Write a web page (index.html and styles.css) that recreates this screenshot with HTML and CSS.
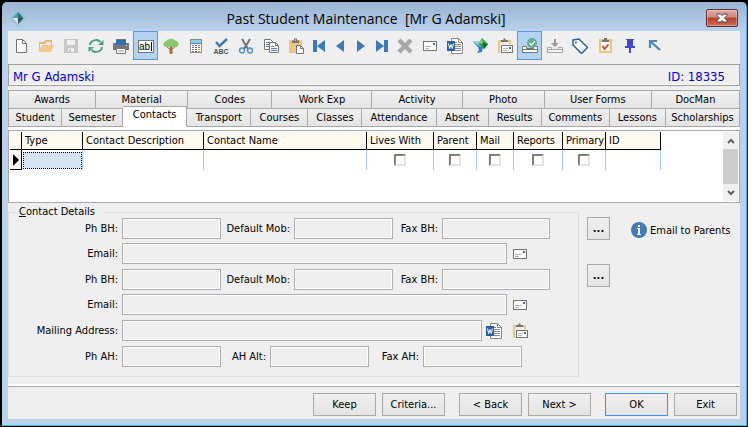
FILE: index.html
```html
<!DOCTYPE html>
<html lang="en">
<head>
    <meta charset="UTF-8">
    <meta name="viewport" content="width=device-width, initial-scale=1.0">
    <title>Past Student Maintenance</title>
    <link rel="stylesheet" href="styles.css">
</head>
<body>
    <!-- Shared icons -->
    <svg class="sprite" aria-hidden="true">
        <symbol id="i-mail" viewBox="0 0 16 16">
            <rect x="1.5" y="3.5" width="13" height="9" fill="#fff" stroke="#757575"/>
            <path d="M3 8.5h6M3 10.5h4" stroke="#b4b4b4"/>
            <rect x="11" y="5" width="2" height="2" fill="#3f72b5"/>
        </symbol>
        <symbol id="i-word" viewBox="0 0 16 16">
            <path d="M4.500 .5h7l4 4v11h-11z" fill="#fff" stroke="#8a8a8a"/>
            <path d="M11.500 .5v4h4" fill="none" stroke="#8a8a8a"/>
            <path d="M8 6.500h6M8 8.500h6M8 10.500h6M8 12.500h6M6 4.500h4" stroke="#8a8a8a"/>
            <rect x="0" y="3" width="8" height="10" fill="#2b5ea5"/>
            <path d="M1.500 5.500l1.200 5 1.300-4 1.300 4 1.200-5" fill="none" stroke="#fff"/>
        </symbol>
        <symbol id="i-clipmail" viewBox="0 0 16 16">
            <path d="M1 2h3v3H3v10H1zM11 2h3v4h-2V4h-1z" fill="#f0c581"/>
            <path d="M4 4V2h2.500V.5h2V2H11v2z" fill="#757575"/>
            <rect x="4.500" y="7.500" width="11" height="7" fill="#fff" stroke="#757575"/>
            <path d="M6 10.500h5M6 12.500h4" stroke="#b4b4b4"/>
            <rect x="12" y="9" width="2" height="2" fill="#3f72b5"/>
        </symbol>
    </svg>

    <div class="frame">
    <div class="window">
        <header class="titlebar">
            <svg class="logo" viewBox="0 0 16 16">
                <path d="M8 0l8 8-8 8-8-8z" fill="#8fc4c8"/>
                <path d="M8 2L2.500 8H8z" fill="#4f99a5"/>
                <path d="M8 2l5.500 6H8z" fill="#2a7486"/>
                <path d="M2.500 8H8v6z" fill="#d4e6ea"/>
                <path d="M8 8h5.500L8 14z" fill="#3c4b55"/>
            </svg>
            <h1>Past Student Maintenance&nbsp; [Mr G Adamski]</h1>
            <button class="close" aria-label="Close">
                <svg viewBox="0 0 12 10">
                    <path d="M1 1h3.500L6 2.600 7.500 1H11v1.500L8.500 5 11 7.500V9H7.500L6 7.400 4.500 9H1V7.500L3.500 5 1 2.500z" fill="#fff" stroke="#50455a"/>
                </svg>
            </button>
        </header>

        <main class="client">
            <div class="toolbar">
                <button aria-label="New"><svg viewBox="0 0 16 16"><path d="M3.500 1.500h6l4 4v9h-10z" fill="#fff" stroke="#757575"/><path d="M9.500 1.500v4h4" fill="none" stroke="#757575"/></svg></button>
                <button aria-label="Open"><svg viewBox="0 0 16 16"><path d="M1 14V4h5l1-2h7v5h-1V4H8L7 6H2v6z" fill="#e6b877"/><path d="M4 7h12l-3 7H0z" fill="#f3c987"/></svg></button>
                <button aria-label="Save" disabled><svg viewBox="0 0 16 16"><path d="M1 1h14v14H1z" fill="#c8c8c8"/><path d="M4 2h8v5H4zM5 10h6v4H5z" fill="#efefef"/><path d="M6 11h2v3H6z" fill="#c8c8c8"/></svg></button>
                <button aria-label="Refresh"><svg viewBox="0 0 16 16"><path d="M2 7a6 5.500 0 0 1 10.500-3M14 9a6 5.500 0 0 1-10.500 3" fill="none" stroke="#48a488" stroke-width="2"/><path d="M15.500 2v5H10zM.5 14V9H6z" fill="#48a488"/></svg></button>
                <button aria-label="Print"><svg viewBox="0 0 16 16"><path d="M0 5h16v7h-3v-2H3v2H0z" fill="#757575"/><path d="M3 1h10v6H3z" fill="#2f70b5"/><path d="M3 1h10v1H3z" fill="#757575"/><path d="M3.500 10.500h9v5h-9z" fill="#fff" stroke="#757575"/><path d="M5 13h6" stroke="#999"/><path d="M13 7h1v1h-1z" fill="#fff"/></svg></button>
                <button class="pressed" aria-label="Text mode"><svg viewBox="0 0 16 16"><rect x=".5" y="2.500" width="15" height="12" fill="#fff" stroke="#757575"/><text x="1" y="12" class="glyph-ab">ab</text><path d="M13.500 4v9" stroke="#111"/></svg></button>
                <button aria-label="Tree"><svg viewBox="0 0 16 16"><path d="M7 7h2v8.500H7zM3.500 8.500l4 3.500M12.500 8.500l-4 3.500" fill="#99704a" stroke="#99704a"/><path d="M1 8C-.5 6 1 3.500 3 3.500 4 0 10 0 12 2.500c4 0 5 5.500 1.500 6.500-3 1-4-.5-6-.5S2.500 10 1 8z" fill="#8ac66c"/></svg></button>
                <button aria-label="Calculator"><svg viewBox="0 0 16 16"><rect x="2.500" y="1.500" width="11" height="13" fill="#fff" stroke="#8a8a8a"/><path d="M3 2h10v3H3z" fill="#8dcce8"/><path d="M3 5.500h10" stroke="#3c8abb"/><path d="M4 7.500h8M4 9.500h8M4 11.500h8M4 13.500h8" stroke="#777" stroke-dasharray="2 1"/><path d="M10 11.500h2M10 13.500h2" stroke="#f0a040"/></svg></button>
                <button aria-label="Spelling"><svg viewBox="0 0 16 16"><path d="M3 4l3.500 4L14 1" fill="none" stroke="#3f78b8" stroke-width="2.400"/><text x="8" y="16" class="glyph-abc">ABC</text></svg></button>
                <button aria-label="Cut"><svg viewBox="0 0 16 16"><path d="M4 1l6 10M12 1L6 11" stroke="#707070" stroke-width="2"/><circle cx="4" cy="12.500" r="2.500" fill="none" stroke="#4c8bc4" stroke-width="1.300"/><circle cx="12" cy="12.500" r="2.500" fill="none" stroke="#4c8bc4" stroke-width="1.300"/></svg></button>
                <button aria-label="Copy"><svg viewBox="0 0 16 16"><path d="M1.500 1.500h6l3 3v7h-9z" fill="#fff" stroke="#757575"/><path d="M3 4.500h4M3 6.500h3M3 8.500h3" stroke="#4a7fbb"/><path d="M6.500 4.500h6l3 3v7h-9z" fill="#fff" stroke="#757575"/><path d="M12.500 4.500v3h3" fill="none" stroke="#757575"/><path d="M8 8.500h3M8 10.500h6M8 12.500h6" stroke="#4a7fbb"/></svg></button>
                <button aria-label="Paste"><svg viewBox="0 0 16 16"><path d="M1 2h13v5H8v8H1z" fill="#f0c581"/><path d="M4 5V2.500h2V.5h3v2h2V5z" fill="#757575"/><path d="M7 1.500h1v1H7z" fill="#fff"/><path d="M8.500 7.500h4l3 3v5h-7z" fill="#fff" stroke="#757575"/><path d="M12.500 7.500v3h3" fill="none" stroke="#757575"/></svg></button>
                <button class="nav" aria-label="First"><svg viewBox="0 0 16 16"><path d="M2 2h4v12H2zM14 2v12L6 8z" fill="#3f78b8"/></svg></button>
                <button class="nav" aria-label="Previous"><svg viewBox="0 0 16 16"><path d="M12 2v12L4 8z" fill="#3f78b8"/></svg></button>
                <button class="nav" aria-label="Next"><svg viewBox="0 0 16 16"><path d="M4 2v12l8-6z" fill="#3f78b8"/></svg></button>
                <button class="nav" aria-label="Last"><svg viewBox="0 0 16 16"><path d="M10 2h4v12h-4zM2 2v12l8-6z" fill="#3f78b8"/></svg></button>
                <button aria-label="Delete" disabled><svg viewBox="0 0 16 16"><path d="M2 2l12 12M14 2L2 14" stroke="#a8a8a8" stroke-width="4.500"/></svg></button>
                <button aria-label="Email"><svg><use href="#i-mail"/></svg></button>
                <button aria-label="Word document"><svg><use href="#i-word"/></svg></button>
                <button aria-label="Export"><svg viewBox="0 0 16 16"><path d="M0 3h6l3 3-2 3z" fill="#8ed0f0"/><path d="M1 4l6 4 4 1-1 5-5 1 2-3-1-3z" fill="#2b7fd0"/><path d="M10 0l6 6-4 5-6-5z" fill="#2f9b4a"/><path d="M10 0l1 5-5 1z" fill="#7fd070"/><path d="M16 6l-4 5-1-6z" fill="#17632f"/></svg></button>
                <button aria-label="Paste to mail"><svg><use href="#i-clipmail"/></svg></button>
                <button class="pressed" aria-label="Check in"><svg viewBox="0 0 16 16"><path d="M.5 14.500v-6h4v2h7v-2h4v6z" fill="#fff" stroke="#757575"/><path d="M1 11.500h14" stroke="#757575"/><circle cx="10" cy="5" r="5" fill="#5fae92"/><path d="M7.500 5l2 2 3.500-4" fill="none" stroke="#fff" stroke-width="1.500"/></svg></button>
                <button aria-label="Check out" disabled><svg viewBox="0 0 16 16"><path d="M.5 14.500v-5h4v2h7v-2h4v5z" fill="#f5f5f5" stroke="#a6a6a6"/><path d="M1 11.500h14" stroke="#a6a6a6"/><path d="M7 1h2v4h3L8 9 4 5h3z" fill="#999"/></svg></button>
                <button aria-label="Tag"><svg viewBox="0 0 16 16"><path d="M1 2l6-1 8.500 8.500-6 6L1 7z" fill="#fff" stroke="#2361a4" stroke-width="1.500"/><circle cx="4" cy="4.500" r="1" fill="#2361a4"/></svg></button>
                <button aria-label="Task"><svg viewBox="0 0 16 16"><path d="M2 1h13v14H2z" fill="#f0c07c"/><path d="M4 4h9v9H4z" fill="#fff"/><path d="M5 4V2h2V0h3v2h2v2z" fill="#757575"/><path d="M5.500 8l2 3 4-4.500" fill="none" stroke="#c3432b" stroke-width="1.800"/></svg></button>
                <button aria-label="Pin"><svg viewBox="0 0 16 16"><path d="M4 1h8v1h-1v6h2v2H9v5H7v-5H3V8h2V2H4z" fill="#4048d8"/></svg></button>
                <button aria-label="Pointer"><svg viewBox="0 0 16 16"><path d="M3 10V3h7M3 3l10 9" fill="none" stroke="#4a86b8" stroke-width="2.200"/></svg></button>
            </div>

            <div class="student-bar">
                <span>Mr G Adamski</span>
                <span>ID: 18335</span>
            </div>

            <nav class="tabs">
                <div class="tab-row tab-row-back">
                    <button>Awards</button><button>Material</button><button>Codes</button><button>Work Exp</button><button>Activity</button><button>Photo</button><button>User Forms</button><button>DocMan</button>
                </div>
                <div class="tab-row tab-row-front">
                    <button>Student</button><button>Semester</button><button class="active">Contacts</button><button>Transport</button><button>Courses</button><button>Classes</button><button>Attendance</button><button>Absent</button><button>Results</button><button>Comments</button><button>Lessons</button><button>Scholarships</button>
                </div>
            </nav>

            <section class="grid-panel">
                <div class="grid-body">
                    <table>
                        <colgroup>
                            <col class="c-mark"><col class="c-type"><col class="c-desc"><col class="c-name"><col class="c-lives"><col class="c-parent"><col class="c-mail"><col class="c-reports"><col class="c-primary"><col class="c-id">
                        </colgroup>
                        <thead>
                            <tr><th></th><th>Type</th><th>Contact Description</th><th>Contact Name</th><th>Lives With</th><th>Parent</th><th>Mail</th><th>Reports</th><th>Primary</th><th>ID</th></tr>
                        </thead>
                        <tbody>
                            <tr>
                                <td class="mark"><svg viewBox="0 0 6 12"><path d="M0 0l6 6-6 6z"/></svg></td>
                                <td><div class="cell-focus"></div></td>
                                <td></td>
                                <td></td>
                                <td><input type="checkbox" aria-label="Lives With"></td>
                                <td><input type="checkbox" aria-label="Parent"></td>
                                <td><input type="checkbox" aria-label="Mail"></td>
                                <td><input type="checkbox" aria-label="Reports"></td>
                                <td><input type="checkbox" aria-label="Primary"></td>
                                <td></td>
                            </tr>
                        </tbody>
                    </table>
                </div>
                <div class="scrollbar">
                    <button aria-label="Scroll up"><svg viewBox="0 0 8 6"><path d="M1 5l3-3 3 3"/></svg></button>
                    <div class="thumb"></div>
                    <button aria-label="Scroll down"><svg viewBox="0 0 8 6"><path d="M1 1l3 3 3-3"/></svg></button>
                </div>
            </section>

            <section class="details">
                <fieldset>
                    <legend><u>C</u>ontact Details</legend>
                    <div class="contact">
                        <div class="field-row">
                            <label for="ph1">Ph BH:</label><input id="ph1" type="text">
                            <label class="l-mob" for="mob1">Default Mob:</label><input id="mob1" type="text">
                            <label class="l-fax" for="fax1">Fax BH:</label><input id="fax1" class="w-fax" type="text">
                        </div>
                        <div class="field-row">
                            <label for="email1">Email:</label><input id="email1" class="w-email" type="text">
                            <button aria-label="Send email"><svg><use href="#i-mail"/></svg></button>
                        </div>
                    </div>
                    <div class="contact">
                        <div class="field-row">
                            <label for="ph2">Ph BH:</label><input id="ph2" type="text">
                            <label class="l-mob" for="mob2">Default Mob:</label><input id="mob2" type="text">
                            <label class="l-fax" for="fax2">Fax BH:</label><input id="fax2" class="w-fax" type="text">
                        </div>
                        <div class="field-row">
                            <label for="email2">Email:</label><input id="email2" class="w-email" type="text">
                            <button aria-label="Send email"><svg><use href="#i-mail"/></svg></button>
                        </div>
                    </div>
                    <div class="field-row">
                        <label for="address">Mailing Address:</label><input id="address" class="w-address" type="text">
                        <button aria-label="Open in Word"><svg><use href="#i-word"/></svg></button>
                        <button aria-label="Copy address"><svg><use href="#i-clipmail"/></svg></button>
                    </div>
                    <div class="field-row">
                        <label for="phah">Ph AH:</label><input id="phah" type="text">
                        <label class="l-alt" for="ahalt">AH Alt:</label><input id="ahalt" type="text">
                        <label class="l-faxah" for="faxah">Fax AH:</label><input id="faxah" type="text">
                    </div>
                </fieldset>
                <div class="lookups">
                    <button class="btn">...</button>
                    <button class="btn">...</button>
                </div>
                <a class="email-parents" href="#">
                    <svg viewBox="0 0 16 16"><circle cx="8" cy="8" r="8" fill="#447ab5"/><path d="M7 3h2v2H7zM6 6h3v6h1v1H6v-1h1V7H6z" fill="#fff"/></svg>
                    Email to Parents
                </a>
            </section>

            <footer class="actions">
                <div class="group"><button class="btn">Keep</button><button class="btn">Criteria...</button></div>
                <div class="group"><button class="btn">&lt; Back</button><button class="btn">Next &gt;</button></div>
                <div class="group"><button class="btn btn-default">OK</button><button class="btn">Exit</button></div>
            </footer>
        </main>
    </div>
    </div>
</body>
</html>
```

FILE: styles.css
```css
* {
    box-sizing: border-box;
}

body {
    margin: 0;
    background: #000;
    font-family: Tahoma, "DejaVu Sans Condensed", "Noto Sans", sans-serif;
    font-size: 11px;
    color: #000;
}

button, input {
    font: inherit;
    color: inherit;
    margin: 0;
    padding: 0;
}

svg {
    display: block;
    width: 16px;
    height: 16px;
}

.sprite {
    display: none;
}

/* Window frame */
.frame {
    display: flex;
    min-height: 100vh;
    padding: 2px 1px 1px 2px;
}

.window {
    flex: 1;
    display: flex;
    flex-direction: column;
    padding: 0 6px 6px;
    background: linear-gradient(#9ab4d2, #b9d1ea 29px, #b9d1ea);
    border-right: 1px solid #2bbde0;
    border-bottom: 1px solid #2bbde0;
    border-radius: 5px 5px 0 0;
}

.titlebar {
    display: flex;
    align-items: center;
    height: 29px;
    padding: 5px 2px 0;
}

.titlebar h1 {
    flex: 1;
    margin: 0;
    font-family: "Open Sans", sans-serif;
    font-size: 14px;
    font-weight: 400;
    line-height: 24px;
    text-align: center;
}

.titlebar .logo {
    margin-bottom: 2px;
}

.close {
    display: flex;
    align-items: center;
    justify-content: center;
    width: 32px;
    height: 18px;
    margin-bottom: 3px;
    border: 1px solid #55323c;
    border-radius: 2px;
    background: linear-gradient(#e3a79c, #d3877b 45%, #b93e28 50%, #cf6a54);
    box-shadow: inset 0 0 0 1px rgba(255, 255, 255, 0.3);
}

.close svg {
    width: 12px;
    height: 10px;
}

.client {
    flex: 1;
    display: flex;
    flex-direction: column;
    background: #efefef;
}

/* Toolbar */
.toolbar {
    display: flex;
    height: 33px;
}

.toolbar button {
    display: flex;
    align-items: center;
    justify-content: center;
    width: 25px;
    height: 29px;
    border: 1px solid transparent;
    background: none;
}

.toolbar .nav {
    width: 21px;
}

.toolbar .pressed {
    background: #b3d3f3;
    border-color: #5b9bdb;
}

.glyph-ab {
    font-family: "Liberation Sans", sans-serif;
    font-size: 10px;
}

.glyph-abc {
    font-family: "Liberation Sans", sans-serif;
    font-size: 7px;
    font-weight: 700;
    text-anchor: middle;
    fill: #4a5a5a;
}

.student-bar {
    display: flex;
    justify-content: space-between;
    align-items: center;
    height: 22px;
    padding: 2px 14px 0 4px;
    border: 1px solid #a0a0a0;
    box-shadow: inset 0 -1px #fff;
    font-size: 13px;
    color: #0000e6;
}

/* Tabs */
.tabs {
    padding-top: 4px;
    border-bottom: 3px solid #fff;
}

.tab-row {
    display: grid;
}

.tab-row-back {
    grid-template-columns: 88fr 92fr 84fr 100fr 90fr 82fr 107fr 88fr;
}

.tab-row-front {
    grid-template-columns: 54fr 61fr 64fr 64fr 57fr 54fr 74fr 52fr 53fr 68fr 56fr 74fr;
}

.tab-row button {
    height: 18px;
    border: solid #a8a8a8;
    border-width: 1px 1px 0 0;
    background: linear-gradient(#f1f1f1, #e4e4e4);
    line-height: 16px;
    white-space: nowrap;
}

.tab-row button:first-child {
    border-left-width: 1px;
}

.tab-row-front button {
    height: 19px;
    border-bottom-width: 1px;
}

.tab-row-front .active {
    height: 21px;
    margin-top: -2px;
    padding-bottom: 3px;
    background: #fff;
    border-bottom-color: #fff;
}

/* Contacts grid */
.grid-panel {
    display: flex;
    height: 73px;
    padding: 1px;
    border: 1px solid #a8a8b0;
    background: #fff;
}

.grid-body {
    flex: 1;
}

table {
    table-layout: fixed;
    width: 651px;
    border-collapse: separate;
    border-spacing: 0;
}

.c-mark { width: 12px; }
.c-type { width: 61px; }
.c-desc { width: 121px; }
.c-name { width: 163px; }
.c-lives { width: 67px; }
.c-parent { width: 43px; }
.c-mail { width: 37px; }
.c-reports { width: 49px; }
.c-primary { width: 43px; }
.c-id { width: 55px; }

th {
    height: 18px;
    padding: 1px 0 0 3px;
    border-right: 1px solid #000;
    border-bottom: 1px solid #000;
    background: #fffaf0;
    font-weight: 400;
    line-height: 16px;
    text-align: left;
    white-space: nowrap;
}

td {
    height: 20px;
    padding: 0;
    border-right: 1px solid #a6caf0;
    text-align: center;
}

.mark {
    background: #fffaf0;
    border-right-color: #000;
    border-bottom: 1px solid #000;
}

.mark svg {
    width: 6px;
    height: 12px;
    margin-left: 3px;
}

.cell-focus {
    height: 17px;
    margin: 0 0 0 1px;
    border: 1px dotted #000;
    background: #d6e4f2;
}

td input {
    appearance: none;
    display: block;
    width: 12px;
    height: 12px;
    margin: 0 auto;
    border: 2px solid;
    border-color: #808080 #e3e3e3 #e3e3e3 #808080;
    background: #fff;
}

.scrollbar {
    display: flex;
    flex-direction: column;
    width: 15px;
    background: #f0f0f0;
}

.scrollbar button {
    display: flex;
    align-items: center;
    justify-content: center;
    height: 17px;
    border: 0;
    background: none;
}

.scrollbar svg {
    width: 8px;
    height: 6px;
    fill: none;
    stroke: #606060;
    stroke-width: 2;
}

.thumb {
    flex: 1;
    background: #cdcdcd;
}

/* Contact details */
.details {
    flex: 1;
    display: flex;
    align-items: flex-start;
    padding-top: 3px;
}

fieldset {
    display: flex;
    flex-direction: column;
    gap: 5px;
    margin: 0;
    padding: 0 28px 9px 0;
    border: 1px solid #dcdcdc;
}

legend {
    margin-left: 7px;
    padding: 0 8px 0 3px;
    line-height: 12px;
}

.contact {
    display: flex;
    flex-direction: column;
    gap: 4px;
}

.field-row {
    display: flex;
    align-items: center;
    gap: 4px;
}

.field-row label {
    width: 109px;
    text-align: right;
    white-space: nowrap;
}

.field-row .l-mob { width: 65px; }
.field-row .l-fax,
.field-row .l-alt { width: 41px; }
.field-row .l-faxah { width: 46px; }

.field-row input {
    width: 99px;
    height: 21px;
    padding: 0 3px;
    border: 1px solid #acacb4;
    background: #efefef;
    box-shadow: inset 0 0 0 1px #fff;
}

.field-row .w-fax { width: 108px; }
.field-row .w-email { width: 385px; }
.field-row .w-address { width: 360px; }

.field-row button {
    border: 0;
    background: none;
}

.field-row button:last-child {
    margin: 0 22px 0 auto;
}

.btn {
    height: 23px;
    border: 1px solid #a8a8a8;
    background: linear-gradient(#f0f0f0, #e4e4e4);
}

.lookups {
    display: flex;
    flex-direction: column;
    gap: 24px;
    padding: 11px 0 0 8px;
}

.lookups .btn {
    width: 23px;
    font-weight: 700;
}

.email-parents {
    display: flex;
    align-items: center;
    gap: 3px;
    margin: 16px 0 0 21px;
    color: inherit;
    text-decoration: none;
    white-space: nowrap;
}

/* Bottom buttons */
.actions {
    display: flex;
    justify-content: flex-end;
    gap: 14px;
    padding: 6px 3px 3px;
    border-top: 1px solid #a8a8a8;
    box-shadow: 0 -2px #fff;
}

.group {
    display: flex;
    gap: 6px;
}

.actions .btn {
    width: 63px;
}

.btn-default {
    border-color: #3c96f0;
}
```
